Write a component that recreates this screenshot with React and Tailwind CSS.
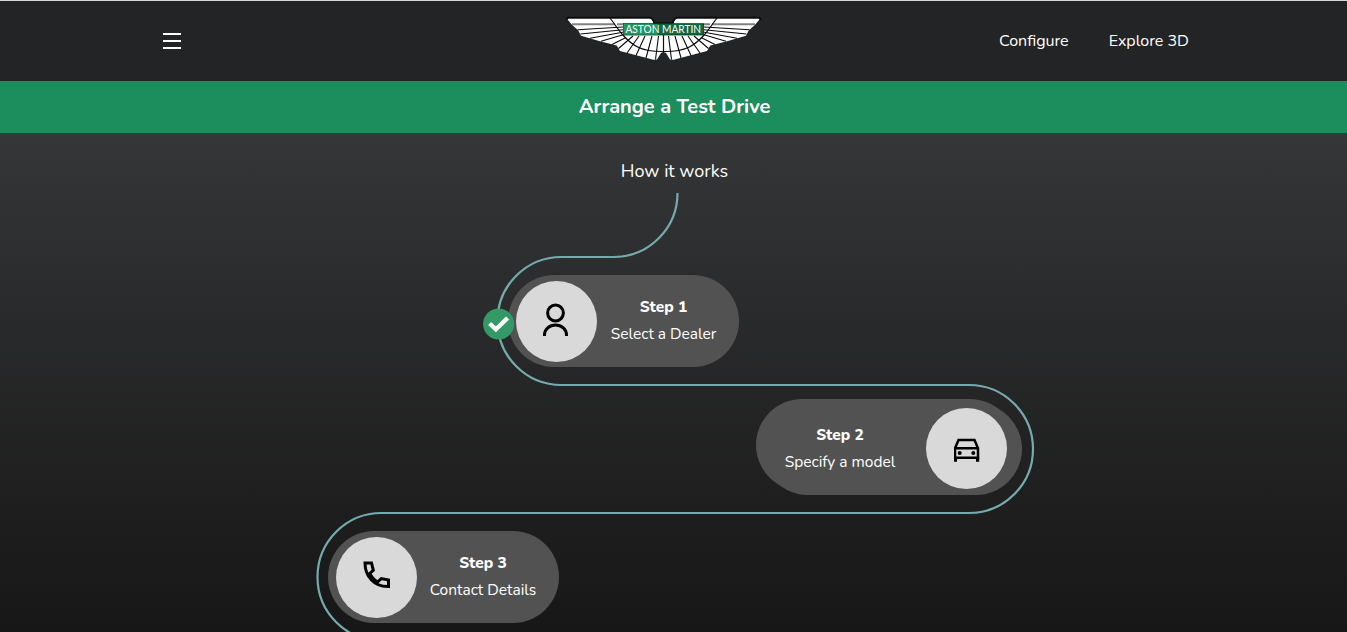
import React from "react";

function WingHalf() {
  return (
    <g fill="none" stroke="#0b0b0b" strokeWidth="1.1">
      <path
        fill="#fff"
        stroke="none"
        d="M0.700 2.500 H84 Q87 3 88 8 H97.500 V36 L95 37 L91 43.600 L87.300 43.800 L75 40.500 L54 35 L50.700 29.500 L33 25 L15 19.800 L12.300 14.500 L5.700 8.500 Z"
      />
      <path d="M6 8.200 H49 M51 8.200 H58" stroke="#808080" strokeWidth="2" />
      <path d="M0.500 4 Q0.500 1.600 3 1.600 H83 Q87 1.600 88.500 7.500 H98" strokeWidth="1.900" />
      <path d="M44 2 C51 11 52 14 57.300 19.500 C66 29 75 36 97.500 35.500" strokeWidth="1.200" />
      <path
        d="M11.500 13.700 L57 11 M14.500 18 L57 13.800 M24 22.200 L58 16 M35 25.300 L58 18.500 M46 28.500 L60 21.500 M52.500 32.500 L67 20 M61 37 L73 20 M70 39.500 L79 20 M80 42 L86 20 M89.500 43.500 L92.500 20"
        strokeWidth="1.100"
      />
    </g>
  );
}

function Logo() {
  return (
    <svg width="196" height="48" viewBox="0 0 196 48" aria-label="Aston Martin">
      <WingHalf />
      <g transform="translate(195 0) scale(-1 1)">
        <WingHalf />
      </g>
      <path d="M97.500 18 V37" stroke="#111" strokeWidth="1.200" />
      <rect x="57.500" y="7.700" width="80" height="11.300" fill="#0f6a42" stroke="#0b3523" strokeWidth=".8" />
      <rect x="57.500" y="8" width="34" height="10.700" fill="#229564" />
      <text x="59.500" y="17.300" textLength="75.500" lengthAdjust="spacingAndGlyphs" className="fill-white font-['Lato',sans-serif] text-[11.500px]">
        ASTON MARTIN
      </text>
    </svg>
  );
}

const Person = () => (
  <svg className="-mt-0.5" width="26" height="34" viewBox="0 0 26 34" fill="none" stroke="#000" strokeWidth="3">
    <circle cx="12.500" cy="10" r="7.900" />
    <path d="M1.500 33 V32 A11 10 0 0 1 23.500 32 V33" />
  </svg>
);

const Car = () => (
  <svg className="mt-0.5" width="26" height="24" viewBox="0 0 26 24" fill="none" stroke="#000" strokeWidth="2.500">
    <g transform="translate(-.5 .3)">
      <path d="M1.500 10 L5 1.600 H21 L24.500 10 V19.500 H1.500 Z M1.500 10 H24.500" />
      <path d="M1.900 19 V23.500 M24.100 19 V23.500" strokeWidth="3.200" />
      <circle cx="6.200" cy="14.800" r="2" fill="#000" stroke="none" />
      <circle cx="19.800" cy="14.800" r="2" fill="#000" stroke="none" />
    </g>
  </svg>
);

const Phone = () => (
  <svg className="-mt-1" width="27" height="28" viewBox="0 0 27 28" fill="none" stroke="#000" strokeWidth="3">
    <path d="M2 2 H8.500 L10.300 9.300 L6.800 12.300 Q9.500 18.300 14.800 20.800 L18.300 17.600 L25.500 19 V25.500 C11.500 26 2 15.500 2 2 Z" />
  </svg>
);

function Disc({ children }) {
  return <div className="relative flex size-[81px] shrink-0 items-center justify-center rounded-full bg-[#d9d9d9]">{children}</div>;
}

function Label({ step, text, width }) {
  return (
    <div className={`${width} relative shrink-0 text-center text-[15.500px] leading-[27px]`}>
      <div className="font-extrabold">{step}</div>
      <div>{text}</div>
    </div>
  );
}

export default function App() {
  return (
    <div className="flex h-[632px] w-full flex-col overflow-hidden bg-[#171717] font-['Nunito','Lato',sans-serif] text-white">
      <header className="flex h-[81px] shrink-0 border-t border-[#d5dcd8] bg-[#232426]">
        <div className="flex w-[566px] items-center pl-[163px]">
          <button className="flex flex-col gap-[5px]" aria-label="Menu">
            <span className="h-0.5 w-[18px] bg-white" />
            <span className="h-0.5 w-[18px] bg-white" />
            <span className="h-0.5 w-[18px] bg-white" />
          </button>
        </div>
        <div className="pt-[15px]">
          <Logo />
        </div>
        <nav className="ml-auto flex items-center gap-10 pr-[158px] text-[16px]">
          <a className="whitespace-nowrap">Configure</a>
          <a className="whitespace-nowrap">Explore 3D</a>
        </nav>
      </header>
      <div className="flex h-[52px] shrink-0 items-center justify-center bg-[#1c8d5d] pl-0.5 text-[20px] font-bold">Arrange a Test Drive</div>
      <main className="relative flex grow flex-col bg-linear-to-b from-[#353638] to-[#171717]">
        <svg className="absolute top-0 left-0" width="1347" height="499" viewBox="0 133 1347 499" fill="none">
          <path d="M677.500 193 A64 64 0 0 1 613.500 257 H561.500 A64 64 0 0 0 561.500 385 H969 A64 64 0 0 1 969 513 H381.500 A64 64 0 0 0 381.500 641" stroke="#76abae" strokeWidth="2.200" />
        </svg>
        <h2 className="mt-6 pl-0.5 text-center text-[18px] leading-7">How it works</h2>
        <div className="relative mt-[90px] ml-[508.400px] flex h-[92px] w-[231px] shrink-0 items-center rounded-full bg-[#525252] pl-[7.600px]">
          <Disc><Person /></Disc>
          <div className="mb-[3px]">
            <Label step="Step 1" text="Select a Dealer" width="w-[133px]" />
          </div>
          <svg className="absolute top-[33px] -left-[26px]" width="33" height="32" viewBox="0 0 33 32">
            <circle cx="16.600" cy="16" r="15.500" fill="#339966" />
            <path d="M7.600 15.500 L13.900 21.300 L25.600 10" fill="none" stroke="#fff" strokeWidth="4.400" />
          </svg>
        </div>
        <div className="relative mt-8 ml-[756px] flex h-24 w-[266px] shrink-0 items-center justify-end pr-[15px]">
          <span className="absolute top-0 left-0 h-[92px] w-[260px] rounded-full bg-[#525252]" />
          <span className="absolute right-0 bottom-0 h-[92px] w-[260px] rounded-full bg-[#525252]" />
          <div className="mt-0.5 mr-[18px]">
            <Label step="Step 2" text="Specify a model" width="w-[136px]" />
          </div>
          <div className="mt-[3px]">
            <Disc><Car /></Disc>
          </div>
        </div>
        <div className="relative mt-9 ml-[328px] flex h-[92px] w-[231px] shrink-0 items-center rounded-full bg-[#525252] pl-2">
          <Disc><Phone /></Disc>
          <div className="mb-[3px]">
            <Label step="Step 3" text="Contact Details" width="w-[132px]" />
          </div>
        </div>
      </main>
    </div>
  );
}
